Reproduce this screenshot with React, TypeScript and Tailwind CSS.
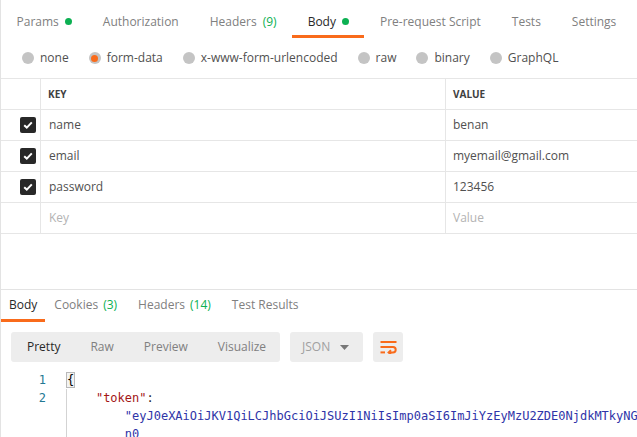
import React from 'react';

const orange = 'border-[#f96b1b]';

function TopTab({ label, active, dot, count }: { label: string; active?: boolean; dot?: boolean; count?: string }) {
    return (
        <div
            className={`flex h-full items-center gap-[6px] whitespace-nowrap border-b-[3px] px-[15.5px] pt-[8px] text-[12px] ${
                active ? `${orange} text-[#282828]` : 'border-transparent text-[#808080]'
            }`}
        >
            <span>{label}</span>
            {count && <span className="text-[#0cb052]">{count}</span>}
            {dot && <span className="h-[7px] w-[7px] rounded-full bg-[#0cb052]" />}
        </div>
    );
}

function Radio({ label, checked }: { label: string; checked?: boolean }) {
    return (
        <div className="flex items-center gap-[6px] text-[12px] text-[#505050]">
            <span className="flex h-[12px] w-[12px] items-center justify-center rounded-full bg-[#c4c4c4]">
                {checked && <span className="h-[7px] w-[7px] rounded-full bg-[#f96b1b]" />}
            </span>
            <span>{label}</span>
        </div>
    );
}

function Check() {
    return (
        <span className="flex h-[16px] w-[16px] items-center justify-center rounded-[2px] bg-[#282828]">
            <svg width="10" height="8" viewBox="0 0 10 8">
                <path d="M1.2 4.2 L3.8 6.6 L8.8 1.4" fill="none" stroke="white" strokeWidth="2" />
            </svg>
        </span>
    );
}

const rows = [
    { key: 'name', value: 'benan' },
    { key: 'email', value: 'myemail@gmail.com' },
    { key: 'password', value: '123456' },
];

export default function App() {
    return (
        <div className="h-[437px] w-[637px] overflow-hidden border-l border-[#e3e3e3] bg-white font-['Open_Sans',sans-serif]">
            <div className="flex h-[38px]">
                <TopTab label="Params" dot />
                <TopTab label="Authorization" />
                <TopTab label="Headers" count="(9)" />
                <TopTab label="Body" dot active />
                <TopTab label="Pre-request Script" />
                <TopTab label="Tests" />
                <TopTab label="Settings" />
            </div>

            <div className="flex h-[40px] items-center gap-[20px] pl-[21px]">
                <Radio label="none" />
                <Radio label="form-data" checked />
                <Radio label="x-www-form-urlencoded" />
                <Radio label="raw" />
                <Radio label="binary" />
                <Radio label="GraphQL" />
            </div>

            <div className="grid grid-cols-[40px_405px_1fr] border-t border-[#e6e6e6] text-[12px] text-[#505050]">
                <div className="h-[31px] border-r border-b border-[#e6e6e6]" />
                <div className="flex h-[31px] items-center border-r border-b border-[#e6e6e6] pl-[7px] text-[10px] font-bold text-[#404040]">
                    KEY
                </div>
                <div className="flex h-[31px] items-center border-b border-[#e6e6e6] pl-[7px] text-[10px] font-bold text-[#404040]">
                    VALUE
                </div>
                {rows.map((r) => (
                    <React.Fragment key={r.key}>
                        <div className="flex h-[31px] items-center justify-end border-r border-b border-[#e6e6e6] pr-[4px]">
                            <Check />
                        </div>
                        <div className="flex h-[31px] items-center border-r border-b border-[#e6e6e6] pl-[8px]">{r.key}</div>
                        <div className="flex h-[31px] items-center border-b border-[#e6e6e6] pl-[7px]">{r.value}</div>
                    </React.Fragment>
                ))}
                <div className="h-[31px] border-r border-b border-[#e6e6e6]" />
                <div className="flex h-[31px] items-center border-r border-b border-[#e6e6e6] pl-[8px] text-[#b3b3b3]">Key</div>
                <div className="flex h-[31px] items-center border-b border-[#e6e6e6] pl-[7px] text-[#b3b3b3]">Value</div>
            </div>

            <div className="h-[55px]" />

            <div className="flex h-[33px] border-t border-[#e3e3e3] text-[12px]">
                <div className={`flex items-center border-b-[3px] ${orange} px-[8px] pt-[1px] text-[#282828]`}>Body</div>
                <div className="flex items-center gap-[5px] border-b-[3px] border-transparent pl-[9px] pr-[10px] pt-[1px] text-[#808080]">
                    Cookies <span className="text-[#0cb052]">(3)</span>
                </div>
                <div className="flex items-center gap-[5px] border-b-[3px] border-transparent pl-[11px] pr-[10px] pt-[1px] text-[#808080]">
                    Headers <span className="text-[#0cb052]">(14)</span>
                </div>
                <div className="flex items-center border-b-[3px] border-transparent pl-[11px] pt-[1px] text-[#808080]">Test Results</div>
            </div>

            <div className="mt-[10px] flex h-[30px] items-stretch gap-[10px] pl-[10px] text-[12px]">
                <div className="flex w-[269px] items-center rounded-[3px] bg-[#ededed]">
                    <span className="pl-[16px] pr-[15px] text-[#282828]">Pretty</span>
                    <span className="px-[15px] text-[#808080]">Raw</span>
                    <span className="px-[15px] text-[#808080]">Preview</span>
                    <span className="px-[15px] text-[#808080]">Visualize</span>
                </div>
                <div className="flex w-[73px] items-center justify-between rounded-[3px] bg-[#ededed] pl-[12px] pr-[14px] text-[#a0a0a0]">
                    <span>JSON</span>
                    <svg width="9" height="5" viewBox="0 0 9 5">
                        <path d="M0 0 H9 L4.5 5 Z" fill="#777" />
                    </svg>
                </div>
                <div className="flex w-[30px] items-center justify-center rounded-[3px] bg-[#ededed]">
                    <svg width="17" height="14" viewBox="0 0 17 14" fill="none" stroke="#f96b1b" strokeWidth="2">
                        <path d="M0.5 2 H16.5" />
                        <path d="M0.5 7 H13 a2.7 2.7 0 0 1 0 5.4 H9" />
                        <path d="M11 10.2 L8.6 12.4 L11 14.6" />
                        <path d="M0.5 12.4 H5" />
                    </svg>
                </div>
            </div>

            <div className="mt-[9px] flex font-['DejaVu_Sans_Mono',monospace] text-[12px] leading-[18px]">
                <div className="w-[45px] text-right text-[#237893]">
                    <div>1</div>
                    <div>2</div>
                </div>
                <div className="ml-[20px] flex-1 overflow-hidden whitespace-pre">
                    <div>
                        <span className="border border-[#b9b9b9] bg-[#f3f3f3]">{'{'}</span>
                    </div>
                    <div className="border-l border-[#d3d3d3]">
                        {'    '}
                        <span className="text-[#a31515]">"token"</span>
                        <span className="text-[#282828]">:</span>
                    </div>
                    <div className="border-l border-[#d3d3d3] text-[#2f34a8]">
                        {'        "eyJ0eXAiOiJKV1QiLCJhbGciOiJSUzI1NiIsImp0aSI6ImJiYzEyMzU2ZDE0NjdkMTkyNGQ5'}
                    </div>
                    <div className="border-l border-[#d3d3d3] text-[#2f34a8]">{'        n0'}</div>
                </div>
            </div>
        </div>
    );
}
